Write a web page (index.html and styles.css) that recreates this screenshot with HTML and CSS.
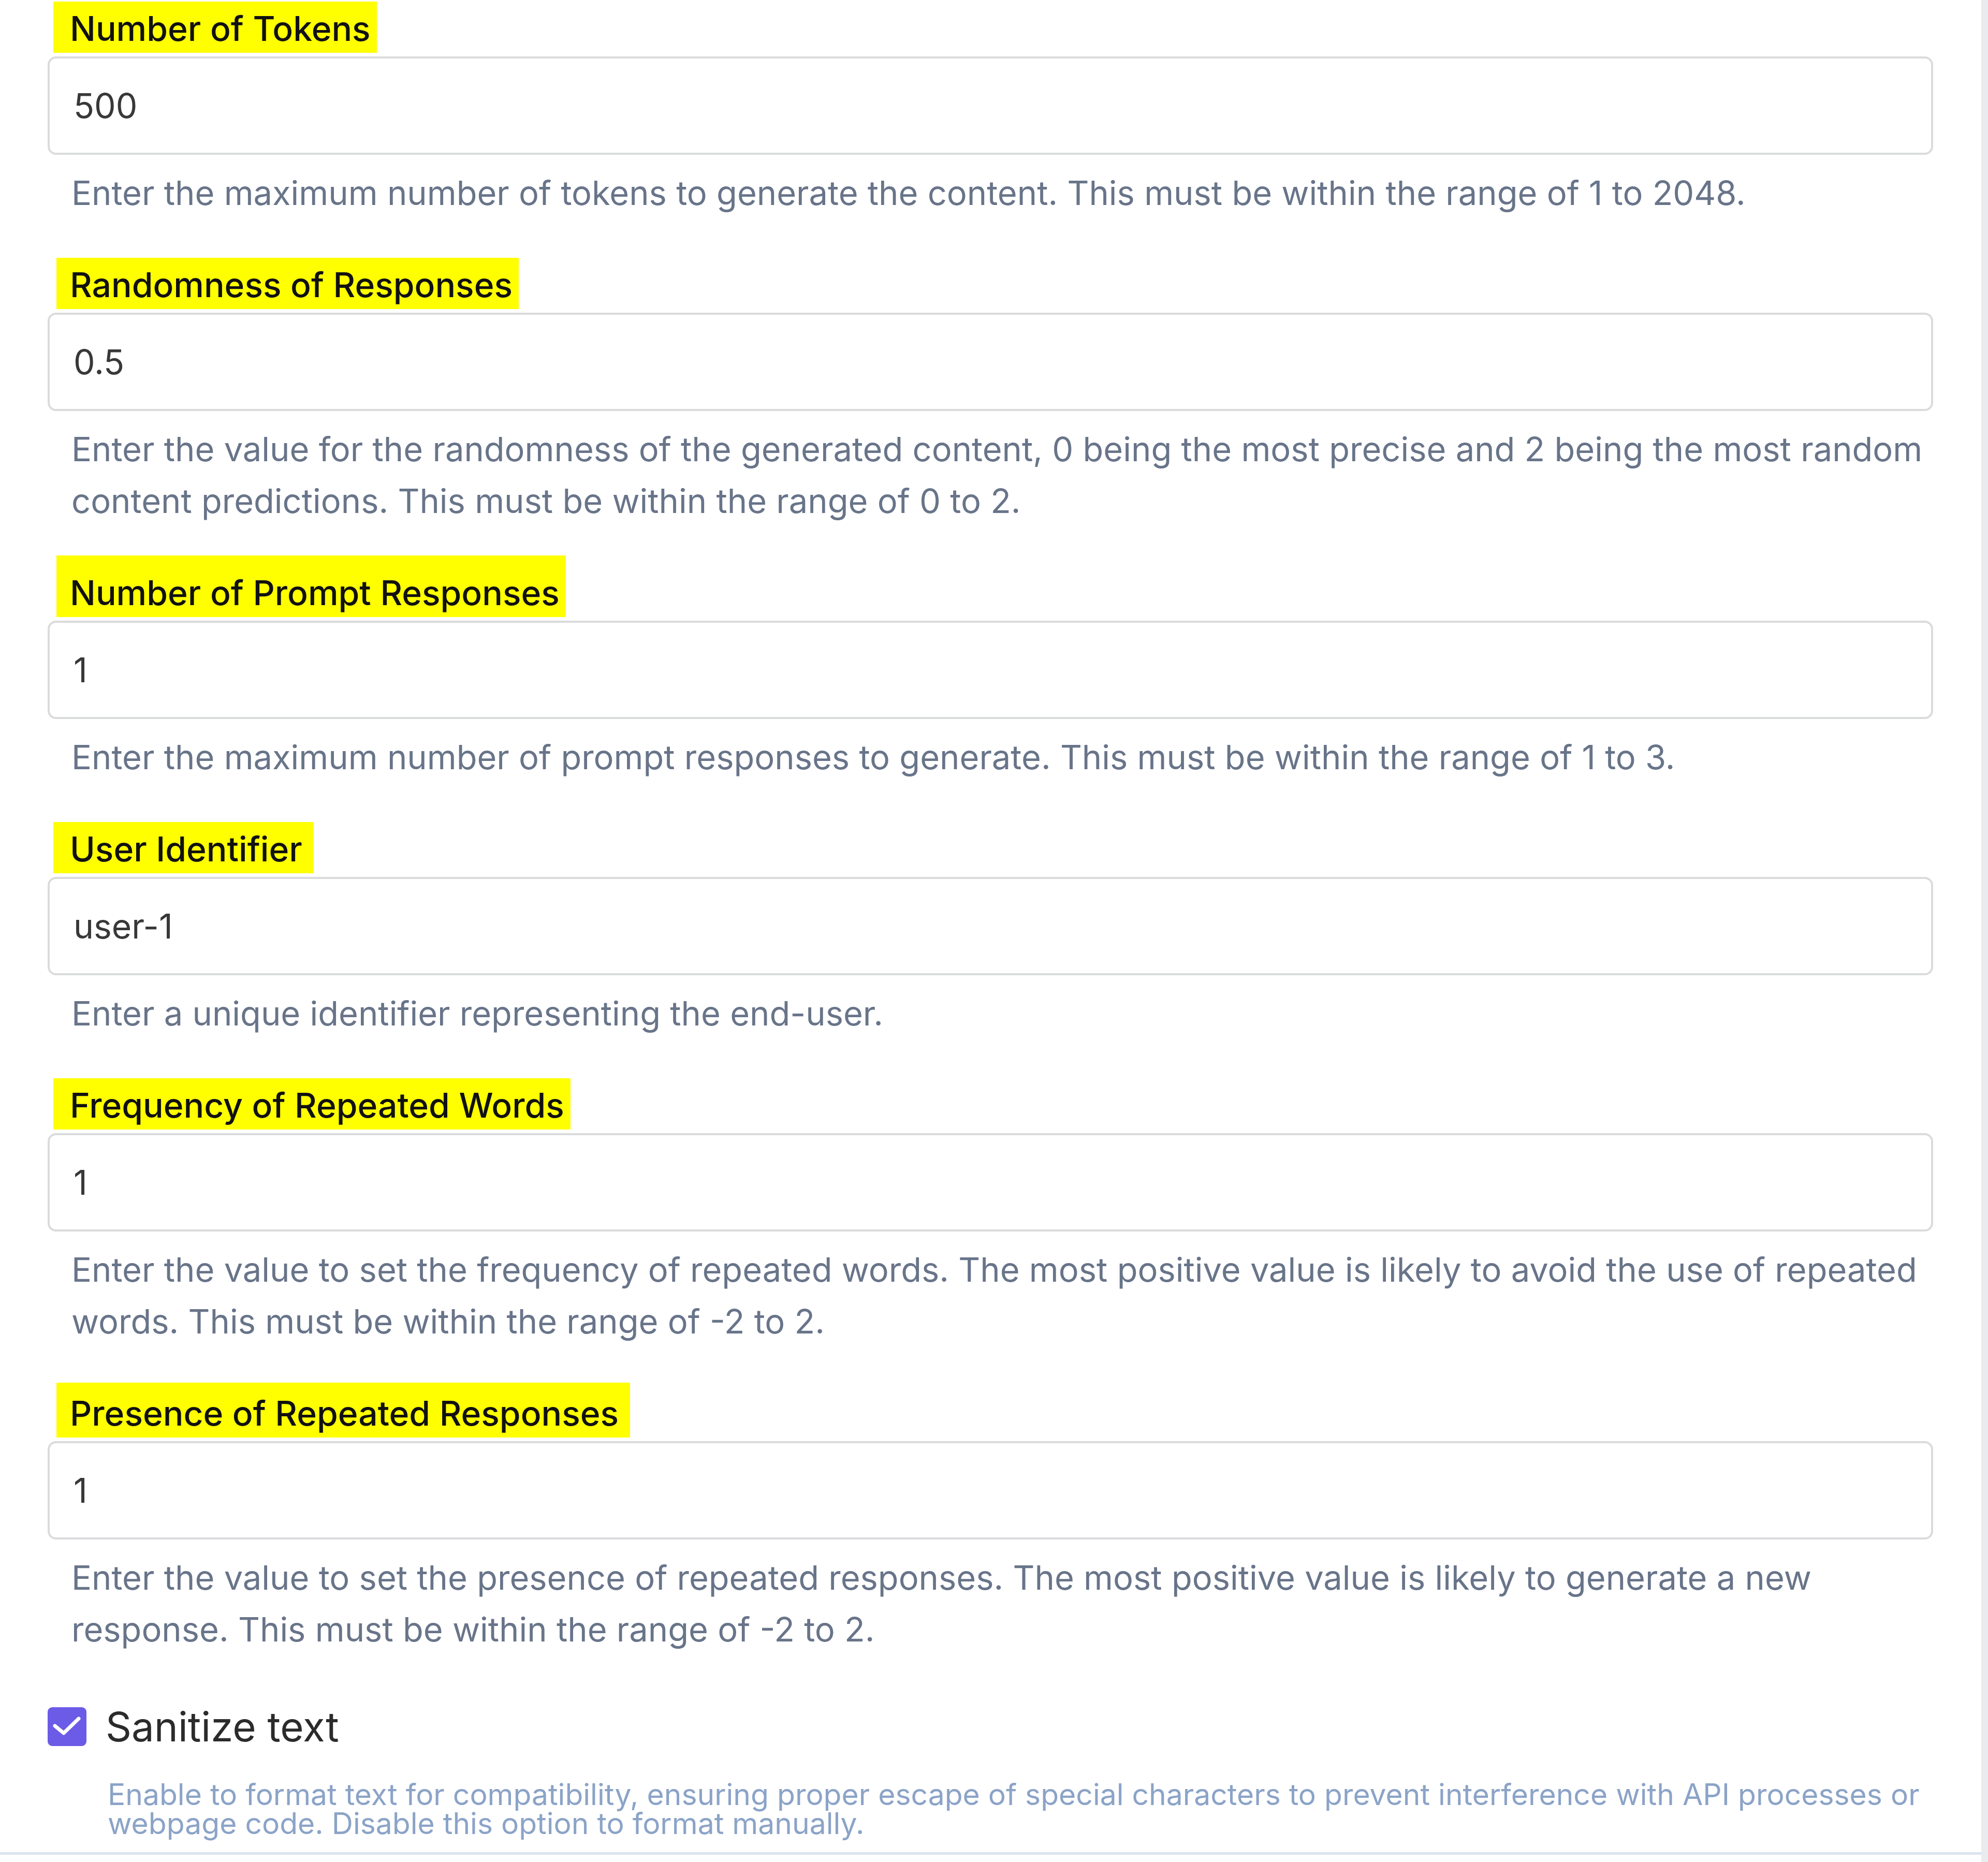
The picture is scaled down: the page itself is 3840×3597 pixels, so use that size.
FILE: index.html
```html
<!DOCTYPE html>
<html lang="en">
<head>
<meta charset="utf-8">
<title>Completion settings</title>
<link rel="stylesheet" href="styles.css">
</head>
<body>
<div class="shell">
  <form class="panel">
    <div class="field">
      <label class="field-label" for="tokens">Number of Tokens</label>
      <input class="field-input" id="tokens" type="text" value="500" readonly>
      <p class="field-help">Enter the maximum number of tokens to generate the content. This must be within the range of 1 to 2048.</p>
    </div>

    <div class="field">
      <label class="field-label field-label--inset" for="temperature">Randomness of Responses</label>
      <input class="field-input" id="temperature" type="text" value="0.5" readonly>
      <p class="field-help">Enter the value for the randomness of the generated content, 0 being the most precise and 2 being the most random content predictions. This must be within the range of 0 to 2.</p>
    </div>

    <div class="field">
      <label class="field-label field-label--inset field-label--tall" for="count">Number of Prompt Responses</label>
      <input class="field-input" id="count" type="text" value="1" readonly>
      <p class="field-help">Enter the maximum number of prompt responses to generate. This must be within the range of 1 to 3.</p>
    </div>

    <div class="field">
      <label class="field-label field-label--wide" for="user">User Identifier</label>
      <input class="field-input" id="user" type="text" value="user-1" readonly>
      <p class="field-help">Enter a unique identifier representing the end-user.</p>
    </div>

    <div class="field">
      <label class="field-label" for="frequency">Frequency of Repeated Words</label>
      <input class="field-input" id="frequency" type="text" value="1" readonly>
      <p class="field-help">Enter the value to set the frequency of repeated words. The most positive value is likely to avoid the use of repeated words. This must be within the range of -2 to 2.</p>
    </div>

    <div class="field">
      <label class="field-label field-label--inset field-label--wide field-label--raised" for="presence">Presence of Repeated Responses</label>
      <input class="field-input" id="presence" type="text" value="1" readonly>
      <p class="field-help">Enter the value to set the presence of repeated responses. The most positive value is likely to generate a new response. This must be within the range of -2 to 2.</p>
    </div>

    <div class="toggle">
      <div class="toggle-row">
        <span class="checkbox" role="checkbox" aria-checked="true">
          <svg viewBox="0 0 75 75" width="75" height="75" aria-hidden="true">
            <rect x="0" y="0" width="75" height="75" rx="9" fill="#6b5be6"/>
            <polyline points="14,36 31,50 60,22" fill="none" stroke="#ffffff" stroke-width="7" stroke-linecap="round" stroke-linejoin="round"/>
          </svg>
        </span>
        <span class="toggle-label">Sanitize text</span>
      </div>
      <p class="toggle-help">Enable to format text for compatibility, ensuring proper escape of special characters to prevent interference with API processes or webpage code. Disable this option to format manually.</p>
    </div>
  </form>
  <div class="rail"></div>
</div>
</body>
</html>
```

FILE: styles.css
```css
* {
  box-sizing: border-box;
}

html,
body {
  margin: 0;
  padding: 0;
  background: #ffffff;
}

body {
  font-family: "Inter", "Noto Sans", "Liberation Sans", sans-serif;
  width: 3840px;
  min-height: 3597px;
}

.shell {
  display: flex;
  align-items: stretch;
  min-height: 3597px;
}

.panel {
  flex: 1;
  display: flex;
  flex-direction: column;
  align-self: flex-start;
  padding: 3px 93px 27px 92px;
  border-bottom: 5px solid #dde4ef;
  background: #ffffff;
}

.rail {
  width: 13px;
  flex: none;
  background: #eaebef;
}

/* form field: highlighted label, text box, help copy */
.field {
  display: flex;
  flex-direction: column;
}

.field + .field {
  margin-top: 75px;
}

.field-label {
  align-self: flex-start;
  height: 99px;
  margin: 0 0 7px 11px;
  padding: 6px 12px 0 32px;
  line-height: 93px;
  font-size: 66px;
  font-weight: 500;
  color: #111111;
  background: #ffff00;
  white-space: nowrap;
}

.field-label--inset {
  margin-left: 17px;
  padding-left: 26px;
}

.field-label--wide {
  padding-right: 22px;
}

.field-label--tall {
  height: 119px;
  margin-top: -20px;
  padding-top: 26px;
}

.field-label--raised {
  height: 106px;
  margin-top: -7px;
  padding-top: 13px;
}

.field-input {
  display: block;
  width: 100%;
  height: 190px;
  margin: 0;
  padding: 0 46px;
  border: 4px solid #dadbdd;
  border-radius: 16px;
  background: #ffffff;
  font-family: inherit;
  font-size: 66px;
  font-weight: 400;
  color: #383838;
  outline: none;
}

.field-help {
  margin: 24px 0 0 0;
  padding-left: 46px;
  font-size: 65px;
  line-height: 100px;
  font-weight: 400;
  color: #687489;
}

/* checkbox option */
.toggle {
  margin-top: 100px;
  display: flex;
  flex-direction: column;
}

.toggle-row {
  display: flex;
  align-items: center;
  gap: 37px;
  height: 75px;
}

.checkbox {
  width: 75px;
  height: 75px;
  flex: none;
  display: block;
}

.checkbox svg {
  display: block;
}

.toggle-label {
  font-size: 78px;
  line-height: 75px;
  font-weight: 400;
  color: #2b2b2b;
}

.toggle-help {
  margin: 66px 0 0 0;
  padding-left: 116px;
  font-size: 57px;
  line-height: 56px;
  color: #8ba3c7;
}
```
